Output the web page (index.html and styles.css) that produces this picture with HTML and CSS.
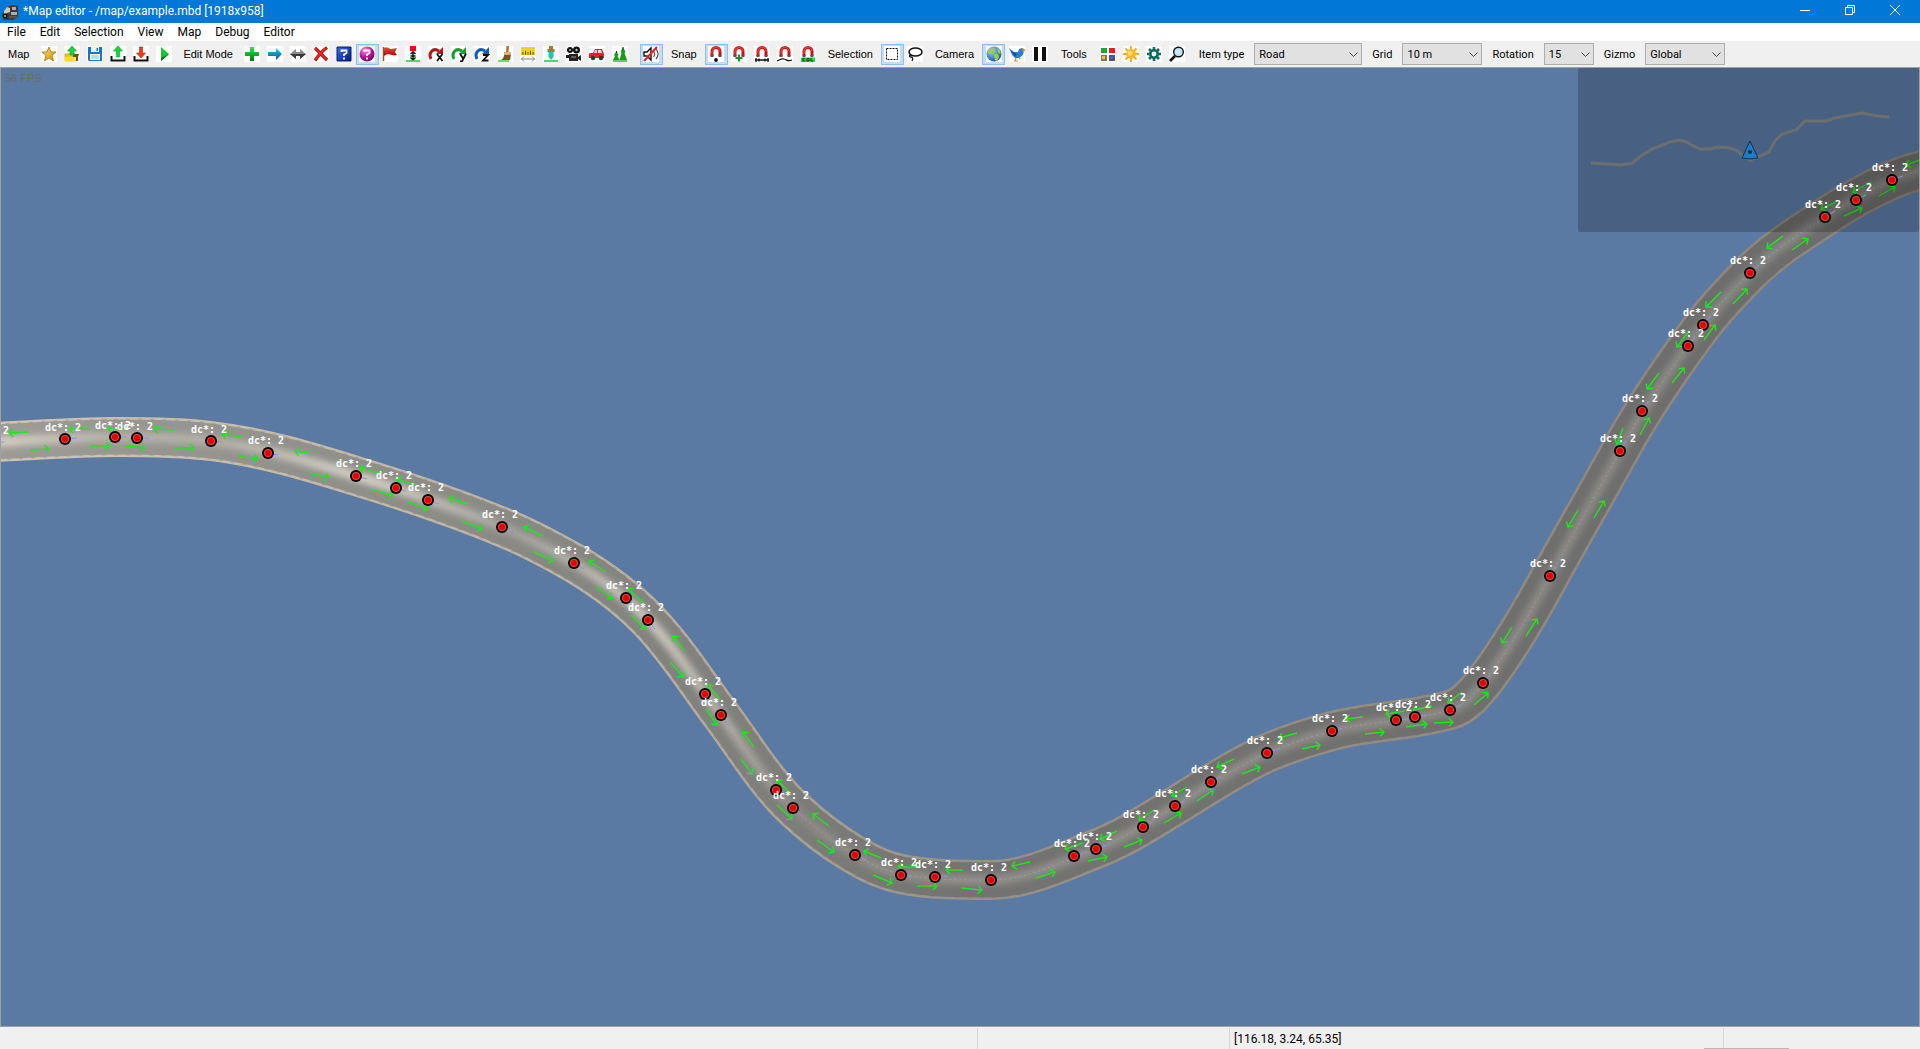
FILE: index.html
```html
<!DOCTYPE html>
<html lang="en">
<head>
<meta charset="utf-8">
<title>Map editor</title>
<link rel="stylesheet" href="styles.css">
</head>
<body>
<svg class="sprite" aria-hidden="true">
  <defs>
    <linearGradient id="g-gold" x1="0" y1="0" x2="1" y2="1"><stop offset="0" stop-color="#ffe97a"/><stop offset="1" stop-color="#c98a00"/></linearGradient>
    <linearGradient id="g-green" x1="0" y1="0" x2="0" y2="1"><stop offset="0" stop-color="#3be04a"/><stop offset="1" stop-color="#00780f"/></linearGradient>
    <linearGradient id="g-blue" x1="0" y1="0" x2="1" y2="1"><stop offset="0" stop-color="#3d6fe8"/><stop offset="1" stop-color="#001a78"/></linearGradient>
    <linearGradient id="g-sky" x1="0" y1="0" x2="0" y2="1"><stop offset="0" stop-color="#35c6f5"/><stop offset="1" stop-color="#07507f"/></linearGradient>
    <linearGradient id="g-red" x1="0" y1="0" x2="0" y2="1"><stop offset="0" stop-color="#f04a3c"/><stop offset="1" stop-color="#9c0c0c"/></linearGradient>
    <radialGradient id="g-pink" cx=".35" cy=".25" r=".9"><stop offset="0" stop-color="#ff8ae8"/><stop offset=".5" stop-color="#c0109c"/><stop offset="1" stop-color="#5c0048"/></radialGradient>
    <radialGradient id="g-globe" cx=".35" cy=".3" r=".8"><stop offset="0" stop-color="#8fdcff"/><stop offset="1" stop-color="#0a4f9c"/></radialGradient>
  </defs>
  <symbol id="i-star" viewBox="0 0 16 16"><path d="M8 1l2 5h5l-4 3.500 1.500 5.500L8 12l-4.500 3L5 9.500 1 6h5z" fill="url(#g-gold)" stroke="#a87400" stroke-width=".8"/></symbol>
  <symbol id="i-open" viewBox="0 0 16 16"><path d="M1 15V8h4l1-1h4l1 2v6z" fill="#f0c419" stroke="#b38a00" stroke-width=".6"/><path d="M9 8h6l-1 3v4h-2v-4H9z" fill="#6b5400"/><path d="M1 11h10v4H1z" fill="#ffd83a"/><path d="M8 0L3.500 5H6v4h4V5h2.500z" fill="#14d63c" stroke="#0a9c28" stroke-width=".6"/></symbol>
  <symbol id="i-save" viewBox="0 0 16 16"><path d="M1 1h14v14H2l-1-1z" fill="#1a73c9"/><path d="M4 1h8v5H4z" fill="#e8f3ff"/><path d="M9.500 2h1.500v3H9.500z" fill="#1a73c9"/><path d="M3 8h10v6H3z" fill="#fff"/><path d="M4 10h8M4 12h8" stroke="#7db5e8"/></symbol>
  <symbol id="i-up" viewBox="0 0 16 16"><path d="M1.500 10v4.500h13V10" fill="none" stroke="#111" stroke-width="2"/><path d="M8 0L3.500 5H6.500v6h3V5h3z" fill="#14d63c" stroke="#0a9c28" stroke-width=".6"/></symbol>
  <symbol id="i-down" viewBox="0 0 16 16"><path d="M1.500 10v4.500h13V10" fill="none" stroke="#111" stroke-width="2"/><path d="M8 12L3.500 7H6.500V1h3v6h3z" fill="#f03c14" stroke="#b02000" stroke-width=".6"/></symbol>
  <symbol id="i-play" viewBox="0 0 16 16"><path d="M5 1l8 7-8 7z" fill="#18c832"/><path d="M13 8l-8 7v-3z" fill="#04700f"/></symbol>
  <symbol id="i-plus" viewBox="0 0 16 16"><path d="M6 1h4v5h5v4h-5v5H6v-5H1V6h5z" fill="url(#g-green)"/></symbol>
  <symbol id="i-right" viewBox="0 0 16 16"><path d="M1 6h8V2l6 6-6 6v-4H1z" fill="url(#g-sky)"/></symbol>
  <symbol id="i-both" viewBox="0 0 16 16"><path d="M0 8l6-5v3h4V3l6 5-6 5v-3H6v3z" fill="#8a8a8a"/><path d="M0 8h16l-6 5v-3H6v3z" fill="#3a3a3a"/></symbol>
  <symbol id="i-cross" viewBox="0 0 16 16"><path d="M2 2l12 12M14 1.500C9 5 5 10 2 14.500" fill="none" stroke="#a80c0c" stroke-width="3.200"/><path d="M2 2l12 12M13 2C9 5 5 10 2 14" fill="none" stroke="#f02a1e" stroke-width="1.600"/></symbol>
  <symbol id="i-help" viewBox="0 0 16 16"><path d="M1 1h14v14H1z" fill="url(#g-blue)" stroke="#001a60"/><path d="M5.500 6V4.500h5V7L8 8.500V10M8 11.500v2" fill="none" stroke="#fff" stroke-width="1.800"/></symbol>
  <symbol id="i-help2" viewBox="0 0 16 16"><circle cx="8" cy="8" r="7.500" fill="url(#g-pink)"/><path d="M5.500 6V4.500h5V7L8 8.500V10M8 11.500v2" fill="none" stroke="#fff" stroke-width="1.800"/></symbol>
  <symbol id="i-flag" viewBox="0 0 16 16"><path d="M1.500 1v14" stroke="#8b5a2b" stroke-width="1.500"/><path d="M2 2c3-2 5 1 7 1l6-1-2 4 2 3c-3 1-5 0-7-.5S4 8 2 10z" fill="url(#g-red)"/></symbol>
  <symbol id="i-ground" viewBox="0 0 16 16"><path d="M5 0h6v5H5z" fill="#e01010"/><path d="M8 5v9M5.500 8L8 6l2.500 2M5.500 11.500L8 14l2.500-2.500M5.500 10h5" fill="none" stroke="#111" stroke-width="1.400"/><path d="M1 15h14" stroke="#10d030" stroke-width="1.500"/></symbol>
  <symbol id="i-rot" viewBox="0 0 16 16"><path d="M3 13C0 7 5 1 11 5" fill="none" stroke="currentColor" stroke-width="3"/><path d="M15 1v7H8z" fill="currentColor"/></symbol>
  <symbol id="i-rotx" viewBox="0 0 16 16"><use href="#i-rot"/><path d="M9 8l5.500 7M14.500 8L9 15" stroke="#111" stroke-width="1.800"/></symbol>
  <symbol id="i-roty" viewBox="0 0 16 16"><use href="#i-rot"/><path d="M9 7.500l3 5M15 7.500L11 15.500H9" fill="none" stroke="#111" stroke-width="1.800"/></symbol>
  <symbol id="i-rotz" viewBox="0 0 16 16"><use href="#i-rot"/><path d="M9 9h5l-5 5.500h5.500" fill="none" stroke="#111" stroke-width="1.800"/></symbol>
  <symbol id="i-brush" viewBox="0 0 16 16"><path d="M9.500 0h2.500l-.5 6H9z" fill="#a8752c"/><path d="M7 6h7v3H7z" fill="#d8b078"/><path d="M7 9h7l-1 5H4c2-1 3-3 3-5z" fill="#7a5420"/><path d="M1 15h11" stroke="#20e040" stroke-width="1.500"/></symbol>
  <symbol id="i-ruler" viewBox="0 0 16 16"><path d="M1 1h14v8H1z" fill="#f2d21c"/><path d="M3 9V6M5.500 9V5M8 9V6M10.500 9V5M13 9V6" stroke="#6b5400"/><path d="M1 13h14M4 10.500L1.500 13 4 15.500M12 10.500l2.500 2.500-2.500 2.500" fill="none" stroke="#888"/></symbol>
  <symbol id="i-drop" viewBox="0 0 16 16"><path d="M6 0h4v3h1.500v3h-7V3H6z" fill="#a8792f"/><path d="M5.500 6h5v5L8 14l-2.500-3z" fill="#1fc4b4"/><path d="M1 15h14" stroke="#10d030" stroke-width="1.500"/></symbol>
  <symbol id="i-film" viewBox="0 0 16 16"><circle cx="4" cy="4" r="3" fill="#111"/><circle cx="10.500" cy="4" r="3.500" fill="#111"/><circle cx="4" cy="4" r="1" fill="#bbb"/><circle cx="10.500" cy="4" r="1.200" fill="#bbb"/><path d="M3 8h9v7H3zM12 11l3-2v6l-3-2zM0 9h3v3H0z" fill="#222"/><path d="M5 11h5" stroke="#999"/></symbol>
  <symbol id="i-car" viewBox="0 0 16 16"><path d="M1 7h3l2-4h7l2 5v4H0V8z" fill="#ee1c1c"/><path d="M6 4h2v3H5zM9 4h3l1 3H9z" fill="#ffd5d5"/><circle cx="4" cy="12" r="2.200" fill="#333"/><circle cx="12" cy="12" r="2.200" fill="#333"/></symbol>
  <symbol id="i-trees" viewBox="0 0 16 16"><path d="M4.500 5l2 4-1 1 2 4H1l2-4-1-1z" fill="#12a020"/><path d="M11 1l2.500 5-1 1 2.500 7H7.500l2-7-1-1z" fill="#169c1e"/><path d="M4.500 5v2M11 1v3" stroke="#0a4a10"/><path d="M1 15h14" stroke="#20c030" stroke-width="1.500"/></symbol>
  <symbol id="i-mute" viewBox="0 0 16 16"><path d="M1 6h3l4-4v12l-4-4H1z" fill="#fff" stroke="#111" stroke-width="1.400"/><path d="M10.500 5c1.500 2 1.500 4 0 6M13 3c2.500 3 2.500 7 0 10" fill="none" stroke="#555" stroke-width="1.200"/><path d="M1 15L14 1" stroke="#e81c1c" stroke-width="2"/></symbol>
  <symbol id="i-magnet" viewBox="0 0 16 16"><path d="M4 10V5.500a4 4 0 0 1 8 0V10" fill="none" stroke="#c01414" stroke-width="3"/><path d="M4 8V5.500a4 4 0 0 1 8 0" fill="none" stroke="#f04438" stroke-width="1.200"/><path d="M2.500 9h3v2h-3zM10.500 9h3v2h-3z" fill="#555"/></symbol>
  <symbol id="i-mag1" viewBox="0 0 16 16"><use href="#i-magnet"/><circle cx="8" cy="14" r="1.900" fill="#111"/></symbol>
  <symbol id="i-mag2" viewBox="0 0 16 16"><use href="#i-magnet"/><path d="M8 8.500v7M4.500 12h7" stroke="#109020" stroke-width="2"/></symbol>
  <symbol id="i-mag3" viewBox="0 0 16 16"><use href="#i-magnet"/><path d="M1 14h14M2 12v4M14 12v4M5 12.500v3M11 12.500v3" stroke="#111" stroke-width="1.300"/></symbol>
  <symbol id="i-mag4" viewBox="0 0 16 16"><use href="#i-magnet"/><path d="M0 15c3-1 4-3 7-2s4 3 8 1" fill="none" stroke="#111" stroke-width="1.300"/></symbol>
  <symbol id="i-mag5" viewBox="0 0 16 16"><use href="#i-magnet"/><path d="M1 11.500h14V16H1z" fill="#12e02c"/><path d="M5 12.500H3v2.500h2M7 12.500h2v2.500H7zM11 12v3h2" fill="none" stroke="#033a08"/></symbol>
  <symbol id="i-marquee" viewBox="0 0 16 16"><path d="M2.500 2.500h11v11h-11z" fill="none" stroke="#111" stroke-dasharray="2 1"/></symbol>
  <symbol id="i-lasso" viewBox="0 0 16 16"><ellipse cx="8.500" cy="6" rx="6.500" ry="4" fill="none" stroke="#111" stroke-width="1.500"/><path d="M4 9c-2 0-2 2 0 2s2 2 1 4" fill="none" stroke="#111" stroke-width="1.300"/></symbol>
  <symbol id="i-globe" viewBox="0 0 16 16"><circle cx="8" cy="8" r="7.500" fill="url(#g-globe)"/><path d="M3 3l5-1 1 2-2 3-3 1-2-1zM8 8l4 0 1 3-2 4-2-1zM11 2l3 2 .5 4-2-1z" fill="#a6c85a"/></symbol>
  <symbol id="i-bird" viewBox="0 0 16 16"><path d="M0 2l5 4 4 0 1-3 3-1 2 2-1 5-4 3H6L3 9z" fill="#2a7be0"/><path d="M2 5l6 3-2 3z" fill="#1450a8"/><path d="M14 3l2 1.500-2 .5zM7 12l-1 3h3M10 11l1 2" fill="none" stroke="#e08a1c" stroke-width="1.200"/></symbol>
  <symbol id="i-pause" viewBox="0 0 16 16"><path d="M2 1h4v14H2zM10 1h4v14h-4z" fill="#111"/></symbol>
  <symbol id="i-tiles" viewBox="0 0 16 16"><path d="M1 2h6v5H1z" fill="#1ca832"/><path d="M9 2h6v5H9z" fill="#d82424"/><path d="M1 9h6v6H1z" fill="#777"/><path d="M9 9h6v6H9z" fill="#555"/><path d="M2 10h3v3H2z" fill="#f0c020"/><path d="M10 10h3v3h-3z" fill="#3a62d0"/></symbol>
  <symbol id="i-sun" viewBox="0 0 16 16"><path d="M8 0v16M0 8h16M2.500 2.500l11 11M13.500 2.500l-11 11" stroke="#f5a61c" stroke-width="1.800"/><circle cx="8" cy="8" r="4.800" fill="#ffb81c"/><circle cx="7" cy="7" r="2.500" fill="#ffdb6e"/></symbol>
  <symbol id="i-gear" viewBox="0 0 16 16"><path d="M8 1v14M1 8h14M3 3l10 10M13 3L3 13" stroke="#0c6a62" stroke-width="2.600"/><circle cx="8" cy="8" r="3.700" fill="#fff" stroke="#0c6a62" stroke-width="2.600"/></symbol>
  <symbol id="i-zoom" viewBox="0 0 16 16"><path d="M6 10l-5 5" stroke="#111" stroke-width="2.600"/><circle cx="9.500" cy="6" r="4.800" fill="#c2e8f5" stroke="#111" stroke-width="1.400"/></symbol>
</svg>

<header class="titlebar">
  <svg class="app-icon" viewBox="0 0 18 18" aria-hidden="true"><path d="M1 12L6 4l5-2 6 1v11l-5 3H3z" fill="#3b3a38"/><path d="M3 8l3-4 3 1v4l-6 2z" fill="#cfcabd"/><path d="M11 4h4v3h-4zM10 9h6v3h-6z" fill="#a8adb5"/><circle cx="4" cy="13" r="2.500" fill="#171717"/><circle cx="4" cy="13" r="1" fill="#c9b890"/><path d="M8 13h8v2H8z" fill="#6a5238"/></svg>
  <h1 class="title">*Map editor - /map/example.mbd [1918x958]</h1>
  <div class="window-buttons">
    <button type="button" aria-label="Minimize"><svg viewBox="0 0 10 10"><path d="M0 5.500h10"/></svg></button>
    <button type="button" aria-label="Restore"><svg viewBox="0 0 10 10"><path d="M.5 2.500h7v7h-7zM2.500 2.500v-2h7v7h-2"/></svg></button>
    <button type="button" aria-label="Close"><svg viewBox="0 0 10 10"><path d="M0 0l10 10M10 0L0 10"/></svg></button>
  </div>
</header>

<nav class="menubar">
  <button type="button">File</button>
  <button type="button">Edit</button>
  <button type="button">Selection</button>
  <button type="button">View</button>
  <button type="button">Map</button>
  <button type="button">Debug</button>
  <button type="button">Editor</button>
</nav>

<div class="toolbar" role="toolbar">
  <span class="label">Map</span>
  <button class="tool" type="button" aria-label="New"><svg><use href="#i-star"/></svg></button>
  <button class="tool" type="button" aria-label="Open"><svg><use href="#i-open"/></svg></button>
  <button class="tool" type="button" aria-label="Save"><svg><use href="#i-save"/></svg></button>
  <button class="tool" type="button" aria-label="Export"><svg><use href="#i-up"/></svg></button>
  <button class="tool" type="button" aria-label="Import"><svg><use href="#i-down"/></svg></button>
  <button class="tool" type="button" aria-label="Run"><svg><use href="#i-play"/></svg></button>
  <span class="label">Edit Mode</span>
  <button class="tool" type="button" aria-label="Add"><svg><use href="#i-plus"/></svg></button>
  <button class="tool" type="button" aria-label="Move"><svg><use href="#i-right"/></svg></button>
  <button class="tool" type="button" aria-label="Scale"><svg><use href="#i-both"/></svg></button>
  <button class="tool" type="button" aria-label="Delete"><svg><use href="#i-cross"/></svg></button>
  <button class="tool" type="button" aria-label="Properties"><svg><use href="#i-help"/></svg></button>
  <button class="tool checked" type="button" aria-pressed="true" aria-label="Node properties"><svg><use href="#i-help2"/></svg></button>
  <button class="tool" type="button" aria-label="Flag"><svg><use href="#i-flag"/></svg></button>
  <button class="tool" type="button" aria-label="Height"><svg><use href="#i-ground"/></svg></button>
  <button class="tool axis-x" type="button" aria-label="Rotate X"><svg><use href="#i-rotx"/></svg></button>
  <button class="tool axis-y" type="button" aria-label="Rotate Y"><svg><use href="#i-roty"/></svg></button>
  <button class="tool axis-z" type="button" aria-label="Rotate Z"><svg><use href="#i-rotz"/></svg></button>
  <button class="tool" type="button" aria-label="Brush"><svg><use href="#i-brush"/></svg></button>
  <button class="tool" type="button" aria-label="Measure"><svg><use href="#i-ruler"/></svg></button>
  <button class="tool" type="button" aria-label="Drop"><svg><use href="#i-drop"/></svg></button>
  <button class="tool" type="button" aria-label="Cutscene"><svg><use href="#i-film"/></svg></button>
  <button class="tool" type="button" aria-label="Traffic"><svg><use href="#i-car"/></svg></button>
  <button class="tool" type="button" aria-label="Vegetation"><svg><use href="#i-trees"/></svg></button>
  <button class="tool checked spaced" type="button" aria-pressed="true" aria-label="Mute"><svg><use href="#i-mute"/></svg></button>
  <span class="label">Snap</span>
  <button class="tool checked" type="button" aria-pressed="true" aria-label="Snap to node"><svg><use href="#i-mag1"/></svg></button>
  <button class="tool" type="button" aria-label="Snap to grid"><svg><use href="#i-mag2"/></svg></button>
  <button class="tool" type="button" aria-label="Snap to length"><svg><use href="#i-mag3"/></svg></button>
  <button class="tool" type="button" aria-label="Snap to terrain"><svg><use href="#i-mag4"/></svg></button>
  <button class="tool" type="button" aria-label="Snap to collision"><svg><use href="#i-mag5"/></svg></button>
  <span class="label">Selection</span>
  <button class="tool checked" type="button" aria-pressed="true" aria-label="Rectangle"><svg><use href="#i-marquee"/></svg></button>
  <button class="tool" type="button" aria-label="Lasso"><svg><use href="#i-lasso"/></svg></button>
  <span class="label">Camera</span>
  <button class="tool checked" type="button" aria-pressed="true" aria-label="Globe"><svg><use href="#i-globe"/></svg></button>
  <button class="tool" type="button" aria-label="Bird"><svg><use href="#i-bird"/></svg></button>
  <button class="tool" type="button" aria-label="Pause"><svg><use href="#i-pause"/></svg></button>
  <span class="label roomy">Tools</span>
  <button class="tool" type="button" aria-label="Content"><svg><use href="#i-tiles"/></svg></button>
  <button class="tool" type="button" aria-label="Sun"><svg><use href="#i-sun"/></svg></button>
  <button class="tool" type="button" aria-label="Settings"><svg><use href="#i-gear"/></svg></button>
  <button class="tool" type="button" aria-label="Find"><svg><use href="#i-zoom"/></svg></button>
  <label class="label field" for="item-type">Item type</label>
  <span class="combo wide"><select id="item-type"><option>Road</option></select><svg viewBox="0 0 9 5"><path d="M.5.5l4 4 4-4"/></svg></span>
  <label class="label field" for="grid">Grid</label>
  <span class="combo"><select id="grid"><option>10 m</option></select><svg viewBox="0 0 9 5"><path d="M.5.5l4 4 4-4"/></svg></span>
  <label class="label field" for="rotation">Rotation</label>
  <span class="combo narrow"><select id="rotation"><option>15</option></select><svg viewBox="0 0 9 5"><path d="M.5.5l4 4 4-4"/></svg></span>
  <label class="label field" for="gizmo">Gizmo</label>
  <span class="combo"><select id="gizmo"><option>Global</option></select><svg viewBox="0 0 9 5"><path d="M.5.5l4 4 4-4"/></svg></span>
</div>

<main class="viewport">
  <svg class="scene" viewBox="1 68 1918 958" preserveAspectRatio="xMaxYMid slice">
    <defs>
      <path id="road" d="M-6,442C38,440 77,437 115,437C147,437 179,437 211,441C261,447 308,461 356,476C405,491 454,507 502,527C527,537 551,550 574,563C601,579 626,597 648,620C676,649 697,683 721,715C744,746 765,781 793,808C812,826 833,842 855,855C870,864 885,871 901,874C930,880 961,880 991,880C1027,880 1062,862 1096,849C1124,838 1149,822 1175,806C1205,788 1235,767 1267,753C1288,744 1310,737 1332,731C1370,721 1412,721 1450,710C1464,706 1474,694 1483,683C1509,650 1530,613 1550,576C1573,534 1597,493 1620,451C1644,407 1673,365 1703,325C1717,307 1734,289 1750,273C1772,251 1799,234 1825,217C1846,203 1869,190 1892,180C1903,175 1914,172 1925,169"/>
      <linearGradient id="verge" gradientUnits="userSpaceOnUse" x1="0" y1="0" x2="1918" y2="0"><stop offset="0" stop-color="#d0c5b4"/><stop offset=".35" stop-color="#b9afa0"/><stop offset=".5" stop-color="#9a9186"/><stop offset="1" stop-color="#8d857a"/></linearGradient>
      <linearGradient id="asphalt" gradientUnits="userSpaceOnUse" x1="0" y1="0" x2="1918" y2="0"><stop offset="0" stop-color="#9c9b95"/><stop offset=".25" stop-color="#8b8b86"/><stop offset=".4" stop-color="#7e7e7a"/><stop offset=".5" stop-color="#737371"/><stop offset="1" stop-color="#6c6c6a"/></linearGradient>
      <linearGradient id="sheen" gradientUnits="userSpaceOnUse" x1="0" y1="0" x2="1918" y2="0"><stop offset="0" stop-color="#d4d0c7"/><stop offset=".06" stop-color="#b3b0a8"/><stop offset=".12" stop-color="#b3b0a8"/><stop offset=".19" stop-color="#d4d0c6"/><stop offset=".27" stop-color="#a09f99"/><stop offset=".34" stop-color="#cbc7be"/><stop offset=".42" stop-color="#8a8985"/><stop offset=".5" stop-color="#918f8b"/><stop offset="1" stop-color="#858583"/></linearGradient>
      <filter id="soft" filterUnits="userSpaceOnUse" x="-20" y="60" width="1960" height="980"><feGaussianBlur stdDeviation="3"/></filter>
      <linearGradient id="cursor" x1="0" y1="0" x2="1" y2="1"><stop offset="0" stop-color="#4fb4f0"/><stop offset="1" stop-color="#0b4f96"/></linearGradient>
      <marker id="head" viewBox="-6 -5 7 10" refX="0" refY="0" markerWidth="7" markerHeight="10" markerUnits="userSpaceOnUse" orient="auto"><path class="arrow-head" d="M-4,-4L0,0L-4,4"/></marker>
      <g id="node"><circle r="6"/><circle class="ring" r="4"/><circle class="core" r="3"/></g>
    </defs>

    <g class="road">
      <use href="#road" stroke="url(#verge)" stroke-width="40"/>
      <use href="#road" stroke="#7f7a72" stroke-opacity=".35" stroke-width="37" stroke-dasharray="4 8"/>
      <use href="#road" stroke="url(#asphalt)" stroke-width="35"/>
      <use href="#road" stroke="url(#sheen)" stroke-width="10" filter="url(#soft)"/>
      <use class="centre-line" href="#road"/>
    </g>

    <g class="arrows" marker-end="url(#head)">
      <path d="M29,432L9,433"/><path d="M89,429L69,429"/><path d="M127,428L107,428"/><path d="M174,430L154,429"/><path d="M242,437L222,434"/><path d="M313,454L295,451"/><path d="M379,473L360,468"/><path d="M415,485L397,479"/><path d="M469,504L449,498"/><path d="M543,536L524,527"/><path d="M606,572L589,561"/><path d="M644,603L628,589"/><path d="M684,650L673,636"/><path d="M720,699L708,685"/><path d="M754,747L743,732"/><path d="M791,794L777,780"/><path d="M829,826L813,814"/><path d="M881,858L864,851"/><path d="M918,867L898,867"/><path d="M963,870L946,870"/><path d="M1030,862L1012,866"/><path d="M1083,843L1065,849"/><path d="M1117,831L1100,839"/><path d="M1154,810L1139,820"/><path d="M1187,787L1172,796"/><path d="M1234,759L1217,767"/><path d="M1297,733L1279,738"/><path d="M1363,717L1346,719"/><path d="M1405,711L1386,714"/><path d="M1432,706L1413,710"/><path d="M1462,692L1448,703"/><path d="M1512,627L1502,643"/><path d="M1578,510L1568,527"/><path d="M1623,428L1617,444"/><path d="M1659,373L1647,389"/><path d="M1689,331L1677,347"/><path d="M1721,292L1706,307"/><path d="M1783,236L1767,248"/><path d="M1836,202L1821,209"/><path d="M1871,182L1853,192"/><path d="M1920,160L1906,165"/>
      <path d="M30,450L49,449"/><path d="M90,446L110,446"/><path d="M125,446L145,448"/><path d="M173,448L194,448"/><path d="M238,456L258,459"/><path d="M310,473L329,478"/><path d="M373,490L393,496"/><path d="M408,502L428,509"/><path d="M462,521L482,529"/><path d="M534,552L553,561"/><path d="M595,586L612,598"/><path d="M631,615L645,629"/><path d="M670,662L683,677"/><path d="M706,709L717,725"/><path d="M741,759L752,774"/><path d="M777,805L792,819"/><path d="M817,840L834,852"/><path d="M873,875L892,883"/><path d="M917,886L937,886"/><path d="M961,888L982,890"/><path d="M1036,878L1055,872"/><path d="M1088,861L1107,857"/><path d="M1124,847L1142,840"/><path d="M1164,823L1181,813"/><path d="M1197,801L1213,790"/><path d="M1242,774L1260,767"/><path d="M1302,749L1320,745"/><path d="M1365,734L1384,732"/><path d="M1406,727L1427,724"/><path d="M1434,723L1453,722"/><path d="M1474,705L1488,693"/><path d="M1526,636L1537,619"/><path d="M1594,518L1604,501"/><path d="M1640,435L1649,418"/><path d="M1672,383L1684,368"/><path d="M1704,340L1715,325"/><path d="M1733,304L1747,289"/><path d="M1792,250L1808,239"/><path d="M1844,216L1862,208"/><path d="M1879,196L1895,187"/>
    </g>

    <g class="minimap">
      <rect x="1578" y="68" width="341" height="164" rx="2"/>
      <path d="M1591,163L1610,164L1621,165L1632,163L1641,156L1652,149L1670,142L1680,140L1686,142L1700,149L1710,149L1718,147L1730,148L1738,151L1744,157L1750,160L1760,156L1769,152L1775,141L1782,134L1796,130L1805,121L1826,121L1835,118L1862,113L1878,116L1889,117"/>
      <path class="cursor" d="M1750,141L1758,158Q1750,160 1742,158Z"/>
      <circle cx="1750" cy="152" r="2"/>
    </g>

    <path class="ticks" d="M0,442h4M65,439l12,-1M115,437h12M137,438h12M211,441l11,1M268,453l10,2M356,476l11,3M396,488l10,3M428,500l11,4M502,527l11,5M574,563l10,6M626,598l9,7M648,620l7,9M705,694l7,9M721,715l7,10M776,790l7,9M793,808l9,8M855,855l11,5M901,874l11,3M935,876h12M991,880l11,-1M1074,856l12,-4M1096,849l12,-4M1143,827l10,-5M1175,806l10,-5M1211,782l10,-6M1267,753l11,-4M1332,731l11,-3M1396,720l12,-1M1415,717l12,-2M1450,710l11,-5M1483,683l7,-8M1550,576l6,-10M1620,451l6,-10M1642,411l6,-10M1688,346l7,-9M1703,325l7,-9M1750,273l9,-8M1825,217l10,-6M1856,200l10,-5M1892,180l11,-4"/>

    <g class="nodes">
      <use href="#node" x="65" y="439"/><use href="#node" x="115" y="437"/><use href="#node" x="137" y="438"/><use href="#node" x="211" y="441"/><use href="#node" x="268" y="453"/><use href="#node" x="356" y="476"/><use href="#node" x="396" y="488"/><use href="#node" x="428" y="500"/><use href="#node" x="502" y="527"/><use href="#node" x="574" y="563"/><use href="#node" x="626" y="598"/><use href="#node" x="648" y="620"/><use href="#node" x="705" y="694"/><use href="#node" x="721" y="715"/><use href="#node" x="776" y="790"/><use href="#node" x="793" y="808"/><use href="#node" x="855" y="855"/><use href="#node" x="901" y="875"/><use href="#node" x="935" y="877"/><use href="#node" x="991" y="880"/><use href="#node" x="1074" y="856"/><use href="#node" x="1096" y="849"/><use href="#node" x="1143" y="827"/><use href="#node" x="1175" y="806"/><use href="#node" x="1211" y="782"/><use href="#node" x="1267" y="753"/><use href="#node" x="1332" y="731"/><use href="#node" x="1396" y="720"/><use href="#node" x="1415" y="717"/><use href="#node" x="1450" y="710"/><use href="#node" x="1483" y="683"/><use href="#node" x="1550" y="576"/><use href="#node" x="1620" y="451"/><use href="#node" x="1642" y="411"/><use href="#node" x="1688" y="346"/><use href="#node" x="1703" y="325"/><use href="#node" x="1750" y="273"/><use href="#node" x="1825" y="217"/><use href="#node" x="1856" y="200"/><use href="#node" x="1892" y="180"/>
    </g>

    <g class="tags">
      <text x="-9" y="434">dc*: 2</text><text x="63" y="431">dc*: 2</text><text x="113" y="429">dc*: 2</text><text x="135" y="430">dc*: 2</text><text x="209" y="433">dc*: 2</text><text x="266" y="444">dc*: 2</text><text x="354" y="467">dc*: 2</text><text x="394" y="479">dc*: 2</text><text x="426" y="491">dc*: 2</text><text x="500" y="518">dc*: 2</text><text x="572" y="554">dc*: 2</text><text x="624" y="589">dc*: 2</text><text x="646" y="611">dc*: 2</text><text x="703" y="685">dc*: 2</text><text x="719" y="706">dc*: 2</text><text x="774" y="781">dc*: 2</text><text x="791" y="799">dc*: 2</text><text x="853" y="846">dc*: 2</text><text x="899" y="866">dc*: 2</text><text x="933" y="868">dc*: 2</text><text x="989" y="871">dc*: 2</text><text x="1072" y="847">dc*: 2</text><text x="1094" y="840">dc*: 2</text><text x="1141" y="818">dc*: 2</text><text x="1173" y="797">dc*: 2</text><text x="1209" y="773">dc*: 2</text><text x="1265" y="744">dc*: 2</text><text x="1330" y="722">dc*: 2</text><text x="1394" y="711">dc*: 2</text><text x="1413" y="708">dc*: 2</text><text x="1448" y="701">dc*: 2</text><text x="1481" y="674">dc*: 2</text><text x="1548" y="567">dc*: 2</text><text x="1618" y="442">dc*: 2</text><text x="1640" y="402">dc*: 2</text><text x="1686" y="337">dc*: 2</text><text x="1701" y="316">dc*: 2</text><text x="1748" y="264">dc*: 2</text><text x="1823" y="208">dc*: 2</text><text x="1854" y="191">dc*: 2</text><text x="1890" y="171">dc*: 2</text>
    </g>
  </svg>
  <p class="fps">56 FPS</p>
</main>

<footer class="statusbar">
  <span></span><span></span><span>[116.18, 3.24, 65.35]</span><span></span>
</footer>
</body>
</html>
```
FILE: styles.css
```css
* { box-sizing: border-box; }

html, body { height: 100%; }

body {
  margin: 0;
  display: flex;
  flex-direction: column;
  overflow: hidden;
  background: #f0f0f0;
  color: #000;
  font-family: Roboto, "Open Sans", "Noto Sans", sans-serif;
  font-size: 12px;
}

button, select { font: inherit; color: inherit; border: 0; border-radius: 0; padding: 0; background: none; }

.sprite { position: absolute; width: 0; height: 0; }

/* Title bar */
.titlebar { display: flex; align-items: center; flex: none; height: 23px; background: #0078d7; color: #fff; }
.app-icon { width: 18px; height: 18px; margin: 0 4px 0 1px; }
.title { margin: 0; flex: 1; font-size: 12px; line-height: 23px; font-weight: 400; white-space: nowrap; }
.window-buttons { display: flex; height: 100%; padding-right: 3px; }
.window-buttons button { display: grid; place-items: center; width: 45px; height: 20px; }
.window-buttons svg { width: 10px; height: 10px; fill: none; stroke: #fff; }

/* Menu */
.menubar { display: flex; flex: none; height: 18px; background: #fff; }
.menubar button { padding: 0 7px; line-height: 19px; }

/* Toolbar */
.toolbar { display: flex; align-items: center; flex: none; height: 26px; overflow: hidden; }
.label { flex: none; padding: 0 8px; font-family: "Liberation Sans", Arial, sans-serif; font-size: 11px; white-space: nowrap; }
.label.roomy { padding: 0 10px; }
.label.field { padding: 0 10px; font-family: Roboto, sans-serif; }
.tool { display: grid; place-items: center; flex: none; width: 23px; height: 21px; border: 1px solid transparent; }
.tool svg { width: 16px; height: 16px; background: #fff; }
.tool.checked { background: #c5ddf3; border-color: #90c0ea; }
.tool.spaced { margin-left: 8px; }
.axis-x { color: #b8141c; }
.axis-y { color: #12a02c; }
.axis-z { color: #1458c0; }

.combo { display: grid; align-items: center; flex: none; width: 80px; height: 22px; }
.combo.wide { width: 108px; }
.combo.narrow { width: 50px; }
.combo > * { grid-area: 1 / 1; }
.combo select { appearance: none; width: 100%; height: 22px; padding: 0 4px; border: 1px solid #adadad; background: #e1e1e1; font-size: 11px; }
.combo svg { justify-self: end; width: 9px; height: 5px; margin-right: 4px; fill: none; stroke: #444; pointer-events: none; }

/* Map view */
.viewport { position: relative; flex: 1; min-height: 0; border: 1px solid #a0a0a0; background: #5b7aa3; }
.scene { display: block; width: 100%; height: 100%; }
.fps { position: absolute; left: 4px; top: 3px; margin: 0; color: #666a6e; font-family: "Liberation Sans", Arial, sans-serif; font-size: 11px; line-height: 14px; }

.road { fill: none; }
.centre-line { stroke: #c3b9a3; stroke-dasharray: 2 3; stroke-opacity: .4; }
.arrows { fill: none; stroke: #1fe61f; stroke-width: 1.4; }
.arrow-head { fill: none; stroke: #1fe61f; stroke-width: 1.4; }
.ticks { fill: none; stroke: #8f8fe6; }
#node circle { fill: #000; }
#node .ring { fill: #f0463c; }
#node .core { fill: #e00000; }
.tags { fill: #fff; font-family: "DejaVu Sans Mono", monospace; font-size: 10px; font-weight: 700; text-anchor: middle; }

.minimap rect { fill: #000; fill-opacity: .2; }
.minimap path { fill: none; stroke: #6d6e6e; stroke-width: 3; }
.minimap .cursor { fill: #1f7cc8; stroke: #12304c; stroke-width: 1; }
.minimap circle { fill: #12304c; }

/* Status bar */
.statusbar { position: relative; display: grid; grid-template-columns: 977fr 252fr 494fr 197fr; flex: none; height: 22px; padding-top: 1px; }
.statusbar span { padding-left: 4px; border-left: 1px solid #d7d7d7; line-height: 22px; white-space: nowrap; }
.statusbar span:first-child { border-left: 0; }
.statusbar::after { content: ""; position: absolute; right: 131px; bottom: 0; width: 85px; height: 1px; background: #b8b8b8; }
```
